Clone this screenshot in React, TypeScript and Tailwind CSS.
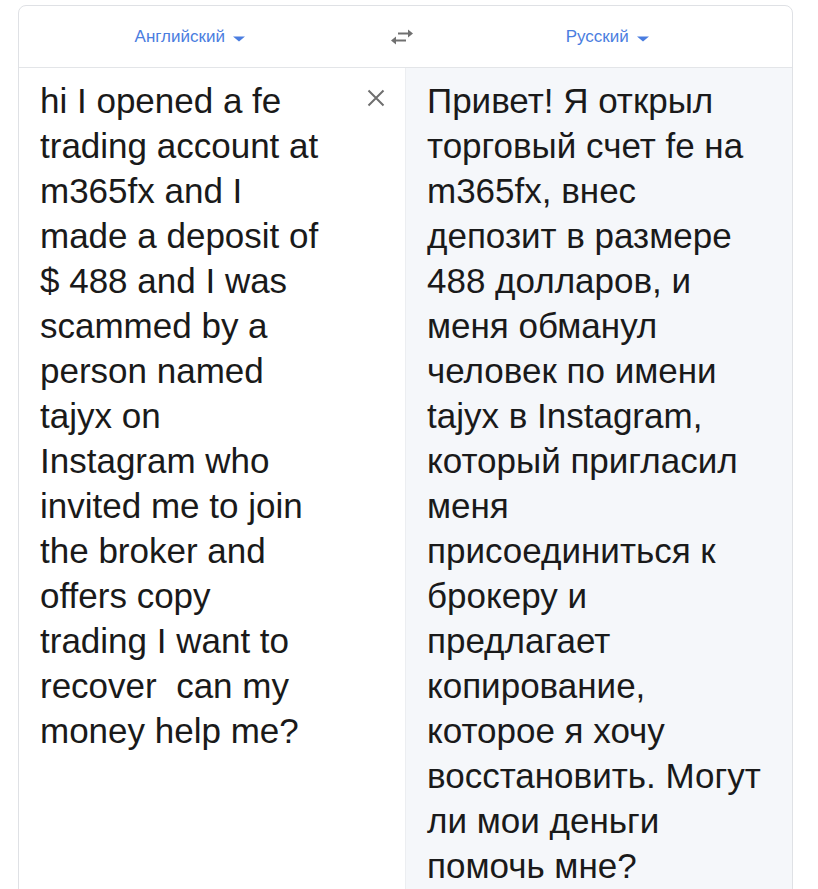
import React from "react";

const left = [
  "hi I opened a fe",
  "trading account at",
  "m365fx and I",
  "made a deposit of",
  "$ 488 and I was",
  "scammed by a",
  "person named",
  "tajyx on",
  "Instagram who",
  "invited me to join",
  "the broker and",
  "offers copy",
  "trading I want to",
  "recover  can my",
  "money help me?",
];

const right = [
  "Привет! Я открыл",
  "торговый счет fe на",
  "m365fx, внес",
  "депозит в размере",
  "488 долларов, и",
  "меня обманул",
  "человек по имени",
  "tajyx в Instagram,",
  "который пригласил",
  "меня",
  "присоединиться к",
  "брокеру и",
  "предлагает",
  "копирование,",
  "которое я хочу",
  "восстановить. Могут",
  "ли мои деньги",
  "помочь мне?",
];

function Caret() {
  return (
    <svg width="12" height="6" viewBox="0 0 12 6" className="ml-[8px] mt-[4px]">
      <path d="M0 0.5 L12 0.5 L6 5.5 Z" fill="#4a7de0" />
    </svg>
  );
}

export default function App() {
  return (
    <div className="w-[818px] h-[889px] bg-white overflow-hidden pt-[5px] pl-[18px]" style={{ fontFamily: '"Liberation Sans", Arial, sans-serif' }}>
      <div className="w-[775px] h-[950px] border border-[#dfe1e5] rounded-[8px] flex flex-col">
        <div className="h-[62px] flex items-center border-b border-[#e3e5e8] shrink-0">
          <div className="flex-1 flex justify-center items-center text-[17px] text-[#4a7de0] pr-[6px]">
            <span>Английский</span>
            <Caret />
          </div>
          <div className="w-[70px] flex justify-center">
            <svg width="26" height="18" viewBox="0 0 26 18">
              <path d="M9 5.5 H20" stroke="#707070" strokeWidth="2" />
              <path d="M19 1.5 L24 5.5 L19 9.5 Z" fill="#707070" />
              <path d="M6 12.5 H17" stroke="#707070" strokeWidth="2" />
              <path d="M7 8.5 L2 12.5 L7 16.5 Z" fill="#707070" />
            </svg>
          </div>
          <div className="flex-1 flex justify-center items-center text-[17px] text-[#4a7de0] pr-[14px]">
            <span>Русский</span>
            <Caret />
          </div>
        </div>
        <div className="flex flex-1">
          <div className="w-[386px] relative pt-[10px] pl-[21px] text-[35px] leading-[45px] text-[#1a1a1a] whitespace-pre">
            {left.map((l, i) => (
              <div key={i}>{l}</div>
            ))}
            <svg width="18" height="18" viewBox="0 0 18 18" className="absolute left-[348px] top-[21px]">
              <path d="M1.5 1.5 L16.5 16.5 M16.5 1.5 L1.5 16.5" stroke="#6f6f6f" strokeWidth="2" />
            </svg>
          </div>
          <div className="flex-1 bg-[#f5f7fa] border-l border-[#eceef1] pt-[10px] pl-[21px] text-[35px] leading-[45px] text-[#1a1a1a] whitespace-pre rounded-br-[8px]">
            {right.map((l, i) => (
              <div key={i}>{l}</div>
            ))}
          </div>
        </div>
      </div>
    </div>
  );
}
